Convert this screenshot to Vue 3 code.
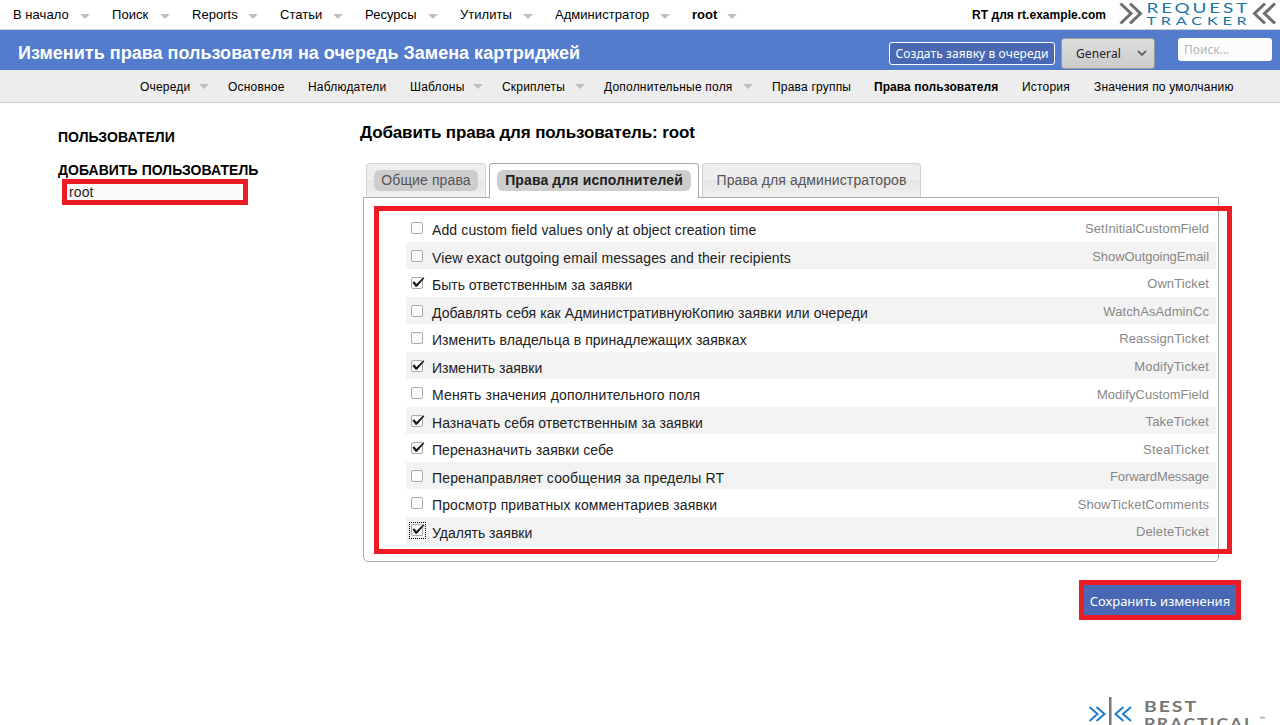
<script setup>
const topMenu = [
  { label: 'В начало' }, { label: 'Поиск' }, { label: 'Reports' }, { label: 'Статьи' },
  { label: 'Ресурсы' }, { label: 'Утилиты' }, { label: 'Администратор' }, { label: 'root', bold: true },
]
const pageMenu = [
  { label: 'Очереди', sub: true }, { label: 'Основное' }, { label: 'Наблюдатели' },
  { label: 'Шаблоны', sub: true }, { label: 'Скриплеты', sub: true },
  { label: 'Дополнительные поля', sub: true }, { label: 'Права группы' },
  { label: 'Права пользователя', bold: true }, { label: 'История' }, { label: 'Значения по умолчанию' },
]
const rights = [
  ['Add custom field values only at object creation time', 'SetInitialCustomField', false],
  ['View exact outgoing email messages and their recipients', 'ShowOutgoingEmail', false],
  ['Быть ответственным за заявки', 'OwnTicket', true],
  ['Добавлять себя как АдминистративнуюКопию заявки или очереди', 'WatchAsAdminCc', false],
  ['Изменить владельца в принадлежащих заявках', 'ReassignTicket', false],
  ['Изменить заявки', 'ModifyTicket', true],
  ['Менять значения дополнительного поля', 'ModifyCustomField', false],
  ['Назначать себя ответственным за заявки', 'TakeTicket', true],
  ['Переназначить заявки себе', 'StealTicket', true],
  ['Перенаправляет сообщения за пределы RT', 'ForwardMessage', false],
  ['Просмотр приватных комментариев заявки', 'ShowTicketComments', false],
  ['Удалять заявки', 'DeleteTicket', true],
]
</script>

<template>
  <div class="page">
    <header class="top">
      <nav class="top-menu">
        <a v-for="m in topMenu" :key="m.label" :class="{ bold: m.bold }"><span>{{ m.label }}</span><i class="arrow" /></a>
      </nav>
      <strong class="site">RT для rt.example.com</strong>
      <svg class="rt-logo" width="160" height="28" viewBox="0 0 160 28">
        <g fill="none" stroke="#6d6e71" stroke-width="3">
          <path d="M1.500 3.500 L12 13.500 L1.500 23.500 M11 3.500 L21.500 13.500 L11 23.500" />
          <path d="M146 3.500 L135.500 13.500 L146 23.500 M156 3.500 L145.500 13.500 L156 23.500" />
        </g>
        <g fill="#1b75a5" font-family="Lato, sans-serif">
          <text x="27.500" y="12.700" font-size="13.500" letter-spacing="2" textLength="103.500" lengthAdjust="spacingAndGlyphs">REQUEST</text>
          <text x="27.500" y="24.800" font-size="12" letter-spacing="3.500" textLength="105" lengthAdjust="spacingAndGlyphs">TRACKER</text>
        </g>
      </svg>
    </header>

    <div class="title-bar">
      <h1>Изменить права пользователя на очередь Замена картриджей</h1>
      <button class="create">Создать заявку в очереди</button>
      <div class="queue">
        <span>General</span>
        <svg width="10" height="7" viewBox="0 0 10 7"><path d="M1 1 L5 5 L9 1" fill="none" stroke="#666" stroke-width="1.800" /></svg>
      </div>
      <input class="search" placeholder="Поиск...">
    </div>

    <nav class="page-menu">
      <a v-for="m in pageMenu" :key="m.label" :class="{ bold: m.bold }"><span>{{ m.label }}</span><i v-if="m.sub" class="arrow" /></a>
    </nav>

    <main class="body">
      <aside class="side">
        <h3>ПОЛЬЗОВАТЕЛИ</h3>
        <h3>ДОБАВИТЬ ПОЛЬЗОВАТЕЛЬ</h3>
        <div class="user-field">root</div>
      </aside>

      <section class="content">
        <h2>Добавить права для пользователь: root</h2>
        <div class="tabs">
          <div class="tab general"><span class="pill">Общие права</span></div>
          <div class="tab active"><span class="pill">Права для исполнителей</span></div>
          <div class="tab admin"><span>Права для администраторов</span></div>
        </div>
        <div class="panel">
          <ul>
            <li v-for="(r, i) in rights" :key="r[1]">
              <span class="check" :class="{ focused: i === rights.length - 1 }">
                <svg width="17" height="17" viewBox="0 0 17 17">
                  <rect x="2.500" y="2.500" width="11" height="11" rx="1.500" fill="#fcfcfc" stroke="#aaa" />
                  <path v-if="r[2]" d="M3.400 7.600 L5.300 6.300 L7.400 8.900 L14.400 2.300 L15.400 3.200 L8 11.700 L6.500 11.700 Z" fill="#1c1c1c" />
                </svg>
              </span>
              <span class="desc">{{ r[0] }}</span>
              <span class="code">{{ r[1] }}</span>
            </li>
          </ul>
          <div class="highlight" />
        </div>
        <button class="save">Сохранить изменения</button>
      </section>
    </main>

    <footer class="foot">
      <svg width="180" height="29" viewBox="0 0 180 29">
        <path d="M1.500 11 L9.500 18 L1.500 25 M8.500 11 L16.500 18 L8.500 25 M35.500 11 L27.500 18 L35.500 25 M43 11 L35 18 L43 25" fill="none" stroke="#1c7dd0" stroke-width="2" />
        <rect x="21" y="1" width="2.500" height="28" fill="#777" />
        <g fill="#777" font-family="Lato, sans-serif" font-weight="bold" font-size="14.500">
          <text x="56" y="16" textLength="54" lengthAdjust="spacingAndGlyphs" letter-spacing="1.500">BEST</text>
          <text x="56" y="33" textLength="111" lengthAdjust="spacingAndGlyphs" letter-spacing="1.500">PRACTICAL</text>
          <text x="171.500" y="26" font-size="7.500" font-weight="normal">™</text>
        </g>
      </svg>
    </footer>
  </div>
</template>

<style>
html, body { margin: 0; overflow: hidden; background: #fff; }
</style>

<style scoped>
.page { width: 1280px; height: 725px; overflow: hidden; display: flex; flex-direction: column; font-family: "Liberation Sans", Arial, sans-serif; color: #000; }
.page * { box-sizing: border-box; }
.bold { font-weight: bold; }
.arrow { width: 0; height: 0; border: 5px solid transparent; border-top-color: #bfbfbf; border-bottom: 0; flex: none; }
.top { height: 30px; flex: none; display: flex; border-bottom: 1px solid #ccc; font-size: 13px; line-height: 30px; }
.top-menu { width: 972px; padding-left: 13px; display: grid; grid-template-columns: 99px 80px 88px 85px 95px 95px 137px 67px; }
.top-menu a { display: flex; justify-content: space-between; align-items: center; padding-right: 22.500px; white-space: nowrap; letter-spacing: .04px; }
.top-menu a .arrow { margin-top: 3px; }
.site { width: 147px; font-size: 12px; white-space: nowrap; letter-spacing: .05px; }
.rt-logo { flex: none; }
.title-bar { height: 40px; flex: none; display: flex; align-items: flex-start; background: #537ccd; padding-left: 18px; }
h1 { width: 871px; margin: 0; color: #fff; font-size: 18px; line-height: 46px; white-space: nowrap; letter-spacing: .02px; }
button { font-family: "Noto Sans", sans-serif; white-space: nowrap; }
.create { width: 166px; height: 23px; margin-top: 12px; padding: 0; background: #4868b3; color: #fff; border: 1px solid #fff; border-radius: 3px; font-size: 12px; line-height: 21px; letter-spacing: .1px; }
.queue { width: 94px; height: 31px; margin: 8px 23px 0 6px; padding: 0 7px 0 14px; display: flex; align-items: center; justify-content: space-between; background: linear-gradient(#dedede, #cbcbcb); border: 1px solid #999; border-radius: 3px; font: 12px "Noto Sans", sans-serif; color: #222; letter-spacing: .1px; }
.search { width: 94px; height: 23px; margin-top: 8px; padding: 0 6px; border: 0; border-radius: 3px; background: #fcfcfc; font: 12px "Noto Sans", sans-serif; }
.search::placeholder { color: #b3b7b3; opacity: 1; }
.page-menu { height: 33px; flex: none; padding-left: 140px; display: grid; grid-template-columns: 88px 80px 102px 92px 102px 168px 102px 148px 72px 150px; background: #ededed; border-bottom: 1px solid #ccc; font-size: 12px; line-height: 34px; white-space: nowrap; letter-spacing: .2px; }
.page-menu a { height: 34px; display: flex; justify-content: space-between; align-items: center; padding-right: 19.500px; }
.page-menu .bold { letter-spacing: .06px; }
.page-menu .arrow { margin-top: -1px; }
.body { height: 593px; flex: none; display: flex; }
.side { width: 360px; padding: 25px 0 0 58px; }
.side h3 { margin: 0 0 15px; font-size: 14px; line-height: 18px; letter-spacing: .05px; }
.side h3 + h3 { margin-bottom: 0; }
.user-field { width: 186px; height: 26px; margin-left: 4px; border: 5px solid #ed1c24; background: #fafafa; padding-left: 2px; font-size: 14px; line-height: 16px; color: #222; letter-spacing: .1px; }
.content { width: 881px; padding-left: 3px; }
h2 { margin: 19px 0 0 -3px; font-size: 17px; line-height: 22px; height: 41px; letter-spacing: -.14px; }
.tabs { height: 35px; display: flex; gap: 3px; padding-left: 3px; margin-bottom: -1px; position: relative; z-index: 1; font-size: 14px; letter-spacing: .12px; }
.tab { height: 34px; border: 1px solid #d0d0d0; border-bottom: 0; border-radius: 4px 4px 0 0; background: linear-gradient(#eee 0 48%, #e5e5e5 49%, #f0f0f0); color: #555; padding-top: 6px; text-align: center; white-space: nowrap; line-height: 21px; }
.general { width: 120px; }
.active { width: 210px; height: 35px; border-color: #aaa; background: #fff; color: #212121; font-weight: bold; }
.admin { width: 219px; }
.pill { display: block; margin: 0 7px; border-radius: 6px; background: #cdcdcd; }
.panel { position: relative; width: 856px; height: 365px; border: 1px solid #aaa; border-radius: 0 0 5px 5px; padding: 16px 2px 0 42px; }
ul { margin: 0; padding: 0; list-style: none; }
li { height: 28px; display: flex; padding: 0 7px 0 3px; }
li:nth-child(even) { height: 27px; background: #f3f3f3; }
li:last-child { height: 28px; }
.check { width: 17px; height: 17px; margin-top: 6px; }
.check svg { display: block; }
.focused { margin-top: 5px; outline: 1px dotted #000; outline-offset: -1px; }
.desc { flex: 1; padding-left: 6px; font-size: 14px; line-height: 32px; color: #212121; white-space: nowrap; }
.code { font-size: 13px; line-height: 29px; color: #888; letter-spacing: .1px; }
li:nth-child(1) .desc, li:nth-child(2) .desc { letter-spacing: .12px; }
li:nth-child(4) .desc { letter-spacing: .07px; }
li:nth-child(5) .desc, li:nth-child(8) .desc, li:nth-child(9) .desc { letter-spacing: .05px; }
li:nth-child(7) .desc, li:nth-child(10) .desc { letter-spacing: .15px; }
li:nth-child(11) .desc { letter-spacing: .09px; }
li:nth-child(1) .code, li:nth-child(7) .code { letter-spacing: .05px; }
li:nth-child(2) .code { letter-spacing: -.06px; }
li:nth-child(6) .code, li:nth-child(8) .code, li:nth-child(9) .code { letter-spacing: .19px; }
li:nth-child(10) .code { letter-spacing: -.1px; }
li:nth-child(7) .code, li:nth-child(9) .code, li:nth-child(11) .code { line-height: 31px; }
.highlight { position: absolute; left: 10px; top: 8px; width: 858px; height: 348px; border: 5px solid #ed1c24; }
.save { display: block; width: 162px; height: 40px; margin: 18px 0 0 auto; padding: 2px 0 0; border: 5px solid #ed1c24; background: #4868b3; color: #fff; font-size: 13px; }
.foot { height: 29px; flex: none; padding-left: 1088px; overflow: hidden; }
.foot svg { display: block; }
</style>
